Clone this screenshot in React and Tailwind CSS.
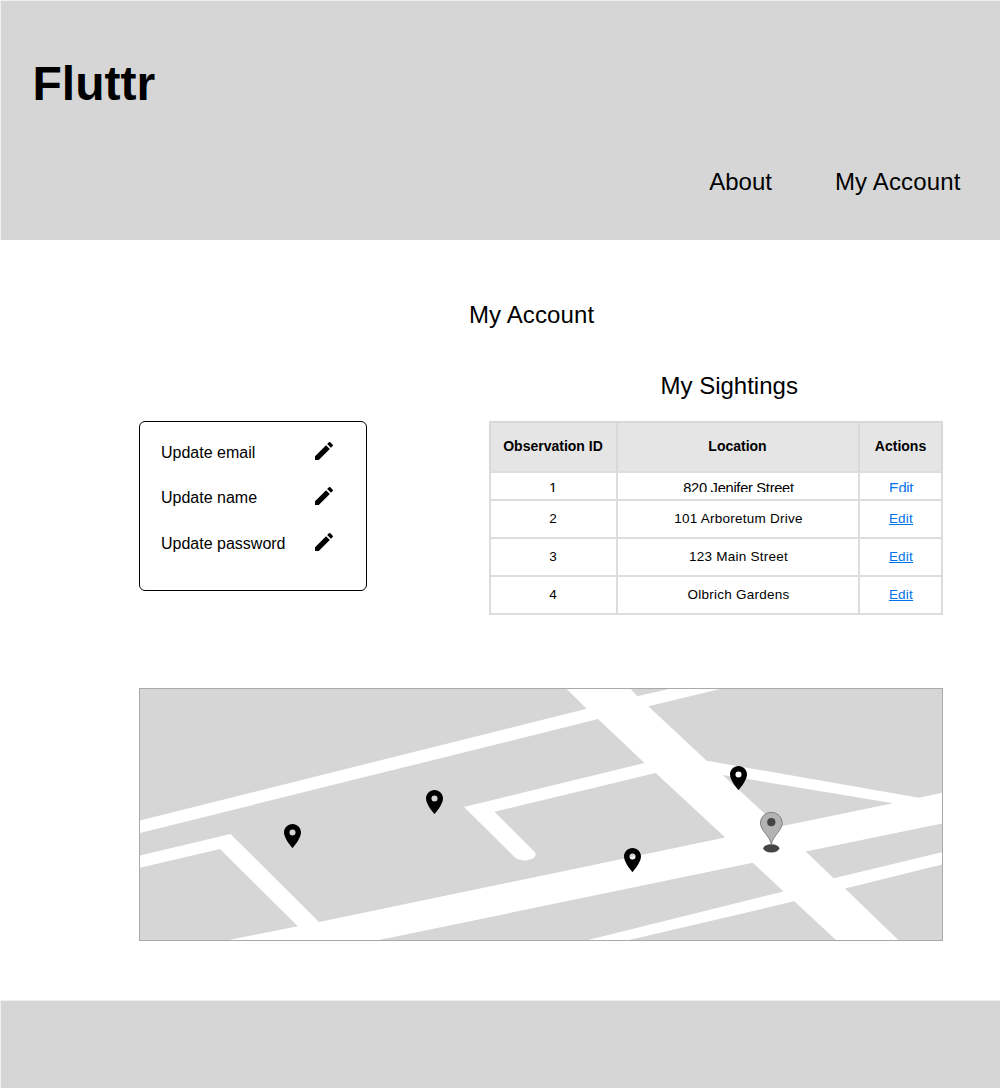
const settings = [
  { label: 'Update email', height: 'h-[45px]' },
  { label: 'Update name', height: 'h-[46px]' },
  { label: 'Update password', height: 'h-[45px]' },
];

const sightings = [
  { id: 1, location: '820 Jenifer Street' },
  { id: 2, location: '101 Arboretum Drive' },
  { id: 3, location: '123 Main Street' },
  { id: 4, location: 'Olbrich Gardens' },
];

const pins = [
  { x: 144, y: 135 },
  { x: 286, y: 101 },
  { x: 484, y: 159 },
  { x: 590, y: 77 },
];

function PencilIcon() {
  return (
    <svg className="size-6" viewBox="0 0 24 24">
      <path d="M3 17.25V21h3.75L17.81 9.94l-3.75-3.75L3 17.25zM20.71 7.04a1 1 0 0 0 0-1.41l-2.34-2.34a1 1 0 0 0-1.41 0l-1.83 1.83 3.75 3.75 1.83-1.83z" />
    </svg>
  );
}

function Header() {
  return (
    <header className="flex h-[240px] flex-col border-t border-l border-[#f0f0f0] bg-[#d6d6d6] pt-[59px] pr-[39.5px] pl-[31.5px]">
      <h1 className="text-[48px] leading-[48px] font-bold">Fluttr</h1>
      <nav className="mt-[58px] flex justify-end gap-[63px] text-2xl">
        <a>About</a>
        <a className="tracking-[0.15px]">My Account</a>
      </nav>
    </header>
  );
}

function SettingsCard() {
  return (
    <section className="h-[170px] w-[228px] rounded-md border border-black pt-[17px] pr-[30px] pl-[21px]">
      {settings.map((s) => (
        <div key={s.label} className={`flex items-start justify-between ${s.height}`}>
          <span className="mt-[2px] text-base">{s.label}</span>
          <PencilIcon />
        </div>
      ))}
    </section>
  );
}

function SightingsTable() {
  const cols = 'grid grid-cols-[125px_240px_81px] gap-x-[2px] px-[2px]';
  return (
    <div className="flex w-[454px] flex-col gap-[2px] bg-[#dddddd] pb-[2px] text-center text-[13.5px]">
      <div className="bg-[#d8d8d8] pt-[2px]">
        <div className={`${cols} h-[48px] text-sm leading-[47px] font-bold`}>
          <div className="bg-[#e5e5e5] pr-px">Observation ID</div>
          <div className="bg-[#e5e5e5] pr-px">Location</div>
          <div className="bg-[#e5e5e5]">Actions</div>
        </div>
      </div>
      {sightings.map((row, i) => (
        <div
          key={row.id}
          className={`${cols} ${i === 0 ? 'h-[26px] text-[14.7px] tracking-[-0.3px]' : 'h-9 tracking-[0.24px]'}`}
        >
          {[row.id, row.location, 'Edit'].map((cell, c) => (
            <div
              key={c}
              className={`bg-white ${c === 0 ? 'pr-px' : 'pl-px'} ${i === 0 ? 'pt-[7px]' : 'pt-[8px]'}`}
            >
              <div
                className={`overflow-hidden leading-5 ${i === 0 ? 'h-[12px]' : 'h-5'} ${
                  c === 2 ? 'text-[#0073ea] underline' : ''
                }`}
              >
                <div className={i === 0 ? '-mt-[2px]' : ''}>{cell}</div>
              </div>
            </div>
          ))}
        </div>
      ))}
    </div>
  );
}

function StreetMap() {
  return (
    <section className="relative mt-[73px] h-[253px] w-[804px] border border-[#a9a9a9] bg-white">
      <svg className="block h-full w-full" viewBox="140 689 802 251" fill="#d6d6d6">
        <path d="M140 689H566.7L586.7 708.7L140 820.5Z" />
        <path d="M630.7 689H669L637.3 696.3Z" />
        <path d="M720 689H942V792.8L919 797.7L706.7 760.7L648.3 706.3Z" />
        <path d="M722.7 775L893 803.3L779 826.7Z" />
        <path d="M140 833L598 719L644.5 763L464 807L512.5 855C516 859 520 860.4 525 860.4C531 860.2 535.7 857.7 535.7 854.3C535.7 852.8 534.5 851.8 533 850.3L494.5 811.7L655.7 773L725.2 837.5L319 922L230.5 834L140 855.5Z" />
        <path d="M140 867.7L220 849L297.8 926.3L229 940H140Z" />
        <path d="M379 940L752.7 862.7L783.5 891.4L588 940Z" />
        <path d="M629 940L794.3 901.3L836 940Z" />
        <path d="M805.7 851.4L942 823.6V852.2L833.7 878.2Z" />
        <path d="M845 888.4L942 864.6V940H898.3Z" />
      </svg>
      {pins.map((p) => (
        <svg
          key={p.x}
          className="absolute h-6 w-[17px]"
          style={{ left: p.x, top: p.y }}
          viewBox="5 2 14 20"
          preserveAspectRatio="none"
        >
          <path d="M12 2C8.13 2 5 5.13 5 9c0 5.25 7 13 7 13s7-7.75 7-13c0-3.87-3.13-7-7-7zm0 9.5a2.5 2.5 0 0 1 0-5 2.5 2.5 0 0 1 0 5z" />
        </svg>
      ))}
      <svg className="absolute top-[122px] left-[619px] h-[42px] w-6" viewBox="0 0 24 42">
        <ellipse cx="12.3" cy="37.3" rx="8" ry="4.1" fill="#454545" />
        <path
          d="M12.3 33.8C11 24.5 1.4 20 1.4 12A10.9 10.7 0 0 1 23.2 12C23.2 20 13.6 24.5 12.3 33.8Z"
          fill="#b3b3b3"
          stroke="#6e6e6e"
          strokeWidth="0.8"
        />
        <circle cx="12.3" cy="11.2" r="4.1" fill="#454545" />
      </svg>
    </section>
  );
}

export default function App() {
  return (
    <div className="flex h-[1088px] w-[1000px] flex-col overflow-hidden bg-white font-['Liberation_Sans',Arial,sans-serif] text-black">
      <Header />
      <main className="flex h-[760px] flex-col pt-[59px] pl-[139px]">
        <h2 className="pl-[330px] text-2xl tracking-[0.12px]">My Account</h2>
        <div className="mt-[39px] flex items-end gap-[122px]">
          <div className="pb-[24px]">
            <SettingsCard />
          </div>
          <section>
            <h2 className="mb-[19px] h-8 pl-[171.5px] text-2xl">My Sightings</h2>
            <SightingsTable />
          </section>
        </div>
        <StreetMap />
      </main>
      <footer className="grow border-t border-l border-[#f0f0f0] bg-[#d6d6d6]" />
    </div>
  );
}
